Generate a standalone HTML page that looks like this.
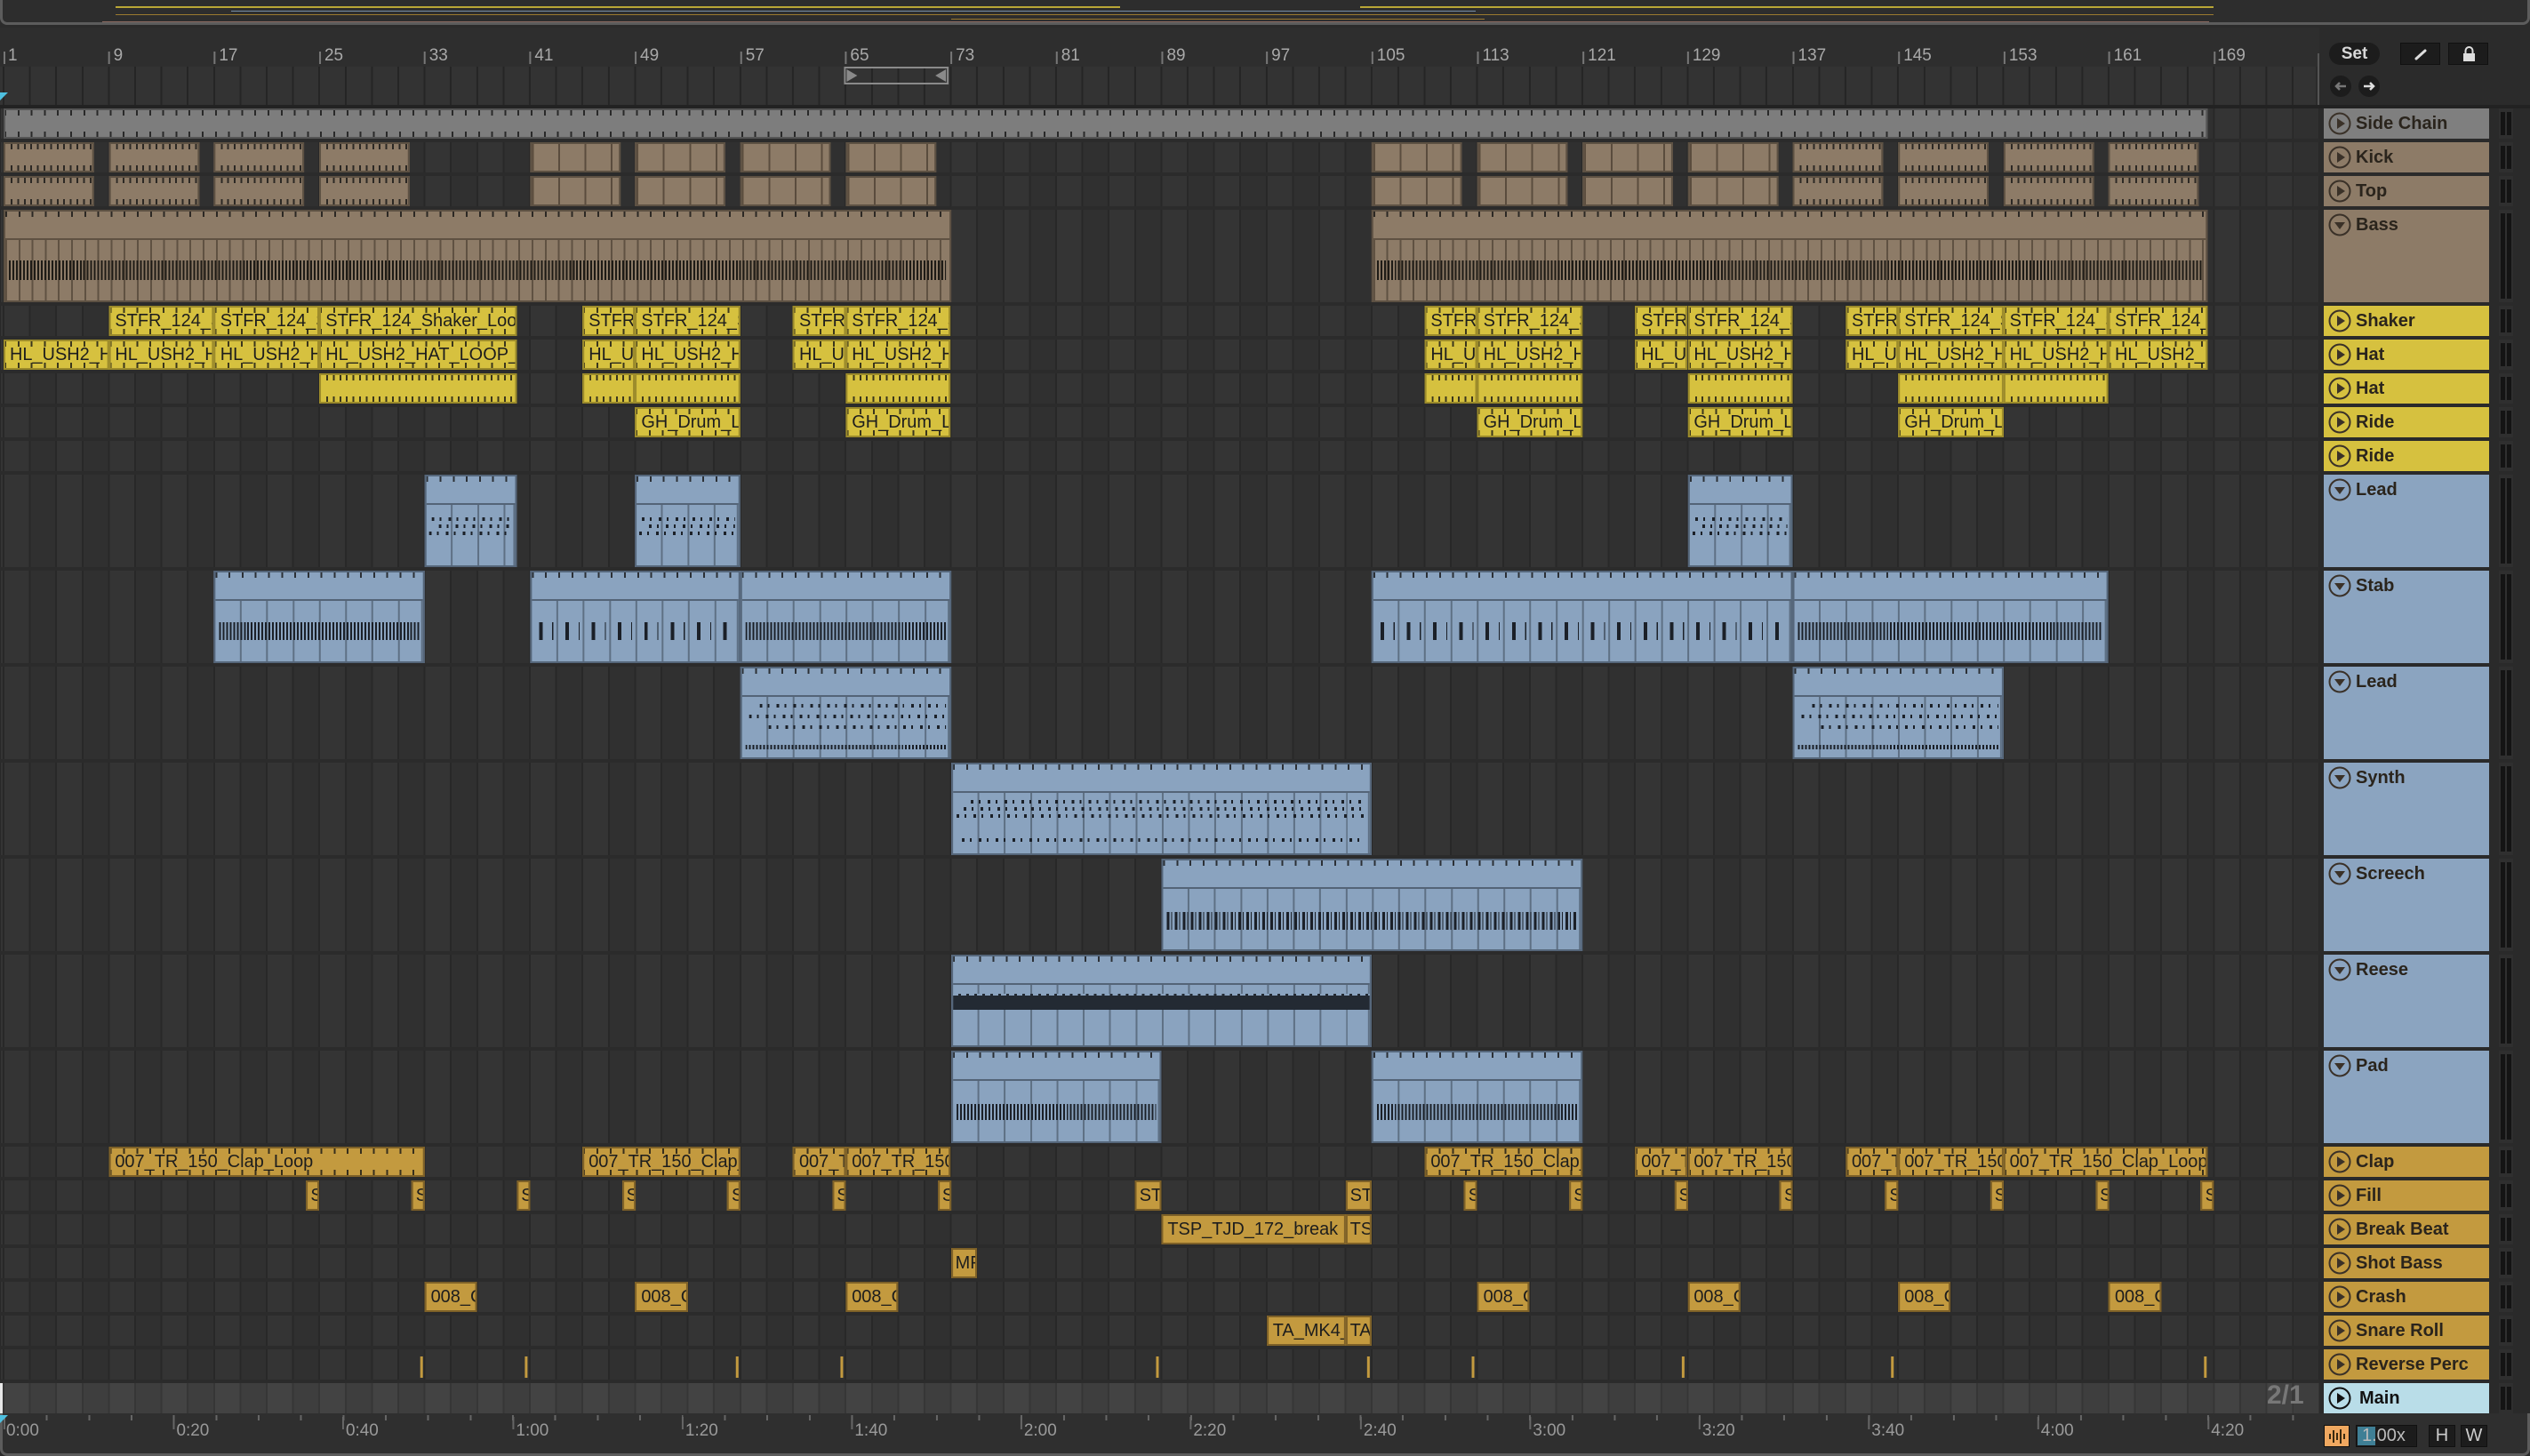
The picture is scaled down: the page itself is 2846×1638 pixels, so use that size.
<!DOCTYPE html>
<html><head><meta charset="utf-8">
<style>
*{margin:0;padding:0}
body{width:2846px;height:1638px;background:#2b2b2b;position:relative;overflow:hidden;font-family:"Liberation Sans",sans-serif}
.abs{position:absolute}
.wrap{position:absolute;left:0;top:0;width:2846px;height:1638px;transform:scaleX(0.9973);transform-origin:0 0}
.row{position:absolute;left:0;width:2616px;background:repeating-linear-gradient(90deg,#282828 0 2px,#343434 2px 29.68px,#282828 29.68px 31.68px,#303030 31.68px 59.36px);background-position:3px 0}
.c{position:absolute;top:0;bottom:0;box-sizing:border-box;overflow:hidden;white-space:nowrap;font:20px "Liberation Sans",sans-serif;color:#1d1d1d;padding-left:5px;line-height:31px}
.y{background:#d6c13f;border:2px solid #9c8b2b}
.o{background:#c39a3f;border:2px solid #7e6128}
.tn{background:#8d7b67;border:2px solid #5d5143}
.bl{background:#8aa3bf;border:2px solid #55667a}
.gr{background:#7d7d7d;border:2px solid #555}
.t::before,.t::after{content:"";position:absolute;left:-1px;right:0;height:6px;background:repeating-linear-gradient(90deg,rgba(20,20,20,.8) 0 2px,transparent 2px 14.84px)}
.t::before{top:0}.t::after{bottom:0}
.td::before,.td::after{content:"";position:absolute;left:6px;right:0;height:6px;background:repeating-linear-gradient(90deg,rgba(20,20,20,.8) 0 2px,transparent 2px 7.42px)}
.td::before{top:0}.td::after{bottom:0}
.dv{background-image:repeating-linear-gradient(90deg,rgba(40,30,20,.5) 0 2px,transparent 2px 29.68px)}
.hd{position:absolute;left:0;right:0;top:0;height:30px;border-bottom:2px solid rgba(40,50,60,.55)}
.hd.k::before{content:"";position:absolute;left:0;right:0;top:0;height:6px;background:repeating-linear-gradient(90deg,rgba(20,20,20,.8) 0 2px,transparent 2px 14.84px)}
.bd{position:absolute;left:0;right:0;top:32px;bottom:0;background:repeating-linear-gradient(90deg,rgba(40,50,60,.45) 0 2px,transparent 2px 29.68px);background-position:-2px 0}
.n{position:absolute;left:4px;right:4px;background:repeating-linear-gradient(90deg,#1b2028 0 2px,transparent 2px 4px)}
.nt{position:absolute;left:4px;right:4px;background:repeating-linear-gradient(90deg,#1e1b16 0 2px,transparent 2px 4px)}
.ns{position:absolute;left:8px;right:4px;background:repeating-linear-gradient(90deg,#1b2028 0 4px,transparent 4px 14.84px,#1b2028 14.84px 16px,transparent 16px 29.68px)}
.nd{position:absolute;left:6px;right:4px;height:4px;background:repeating-linear-gradient(90deg,#1b2028 0 3px,transparent 3px 9px,#1b2028 9px 11px,transparent 11px 19px)}
.h{position:absolute;left:2614px;width:186px;box-sizing:border-box;font:bold 20px "Liberation Sans",sans-serif;color:#2a241c;padding-left:36px;line-height:34px}
.m{position:absolute;left:2811px;width:16px;background:#2f2f2f}
.m::before{content:"";position:absolute;left:2px;width:5px;top:4px;bottom:4px;background:#141414}
.m::after{content:"";position:absolute;left:9px;width:5px;top:4px;bottom:4px;background:#141414}
.bn{position:absolute;top:52px;font:19px "Liberation Sans",sans-serif;color:#a9a9a9}
.bt{position:absolute;top:58px;width:2px;height:14px;background:#777}
.tl{position:absolute;top:1599px;font:19px "Liberation Sans",sans-serif;color:#9a9a9a}
.tt{position:absolute;top:1594px;width:2px;height:14px;background:#666}
.rp{position:absolute;width:3px;top:8px;bottom:2px;background:#c39a3f}
</style></head><body>

<!-- overview -->
<div class="abs" style="left:0;top:0;width:2846px;height:28px;background:#2d2d2d;border-bottom:3px solid #5c5c5c;border-left:3px solid #5c5c5c;border-right:3px solid #5c5c5c;border-radius:0 0 8px 8px;box-sizing:border-box"></div>
<div class="abs" style="left:130px;top:7px;width:1130px;height:2px;background:#b9a636"></div>
<div class="abs" style="left:1530px;top:7px;width:960px;height:2px;background:#b9a636"></div>
<div class="abs" style="left:260px;top:12px;width:1400px;height:1px;background:#7890a8"></div>
<div class="abs" style="left:130px;top:16px;width:2360px;height:1px;background:#9a7a30"></div>
<div class="abs" style="left:1070px;top:21px;width:600px;height:1px;background:#9a7a30"></div>
<div class="abs" style="left:115px;top:24px;width:2370px;height:1px;background:#8a6a60"></div>

<div class="abs" style="left:0;top:31px;width:2609px;height:44px;background:#2e2e2e"></div>
<div class="abs" style="left:0;top:118px;width:2846px;height:4px;background:#222"></div>
<div class="abs" style="left:2609px;top:122px;width:237px;height:1468px;background:#2a2a2a"></div>
<!-- bottom ruler bg -->
<div class="abs" style="left:0;top:1590px;width:2846px;height:48px;background:#2f2f2f;border-left:3px solid #5c5c5c;border-bottom:3px solid #5c5c5c;border-right:3px solid #5c5c5c;border-radius:0 0 8px 8px;box-sizing:border-box"></div>

<div class="wrap">
<div class="abs" style="left:0;top:75px;width:2612px;height:43px;background:repeating-linear-gradient(90deg,#252525 0 2px,#333 2px 29.68px);background-position:3px 0"></div>
<div class="abs" style="left:0;top:104px;width:0;height:0;border-left:9px solid #4ec0e0;border-bottom:9px solid transparent"></div>
<div class="abs" style="left:952px;top:75px;width:118px;height:20px;border:2px solid #8a8a8a;box-sizing:border-box"></div>
<div class="abs" style="left:955px;top:78px;width:0;height:0;border-left:12px solid #8a8a8a;border-top:7px solid transparent;border-bottom:7px solid transparent"></div>
<div class="abs" style="left:1055px;top:78px;width:0;height:0;border-right:12px solid #8a8a8a;border-top:7px solid transparent;border-bottom:7px solid transparent"></div>

<div class="bt" style="left:4px"></div><div class="bn" style="left:9px">1</div>
<div class="bt" style="left:122px"></div><div class="bn" style="left:128px">9</div>
<div class="bt" style="left:241px"></div><div class="bn" style="left:247px">17</div>
<div class="bt" style="left:360px"></div><div class="bn" style="left:366px">25</div>
<div class="bt" style="left:478px"></div><div class="bn" style="left:484px">33</div>
<div class="bt" style="left:597px"></div><div class="bn" style="left:603px">41</div>
<div class="bt" style="left:716px"></div><div class="bn" style="left:722px">49</div>
<div class="bt" style="left:835px"></div><div class="bn" style="left:841px">57</div>
<div class="bt" style="left:953px"></div><div class="bn" style="left:959px">65</div>
<div class="bt" style="left:1072px"></div><div class="bn" style="left:1078px">73</div>
<div class="bt" style="left:1191px"></div><div class="bn" style="left:1197px">81</div>
<div class="bt" style="left:1310px"></div><div class="bn" style="left:1316px">89</div>
<div class="bt" style="left:1428px"></div><div class="bn" style="left:1434px">97</div>
<div class="bt" style="left:1547px"></div><div class="bn" style="left:1553px">105</div>
<div class="bt" style="left:1666px"></div><div class="bn" style="left:1672px">113</div>
<div class="bt" style="left:1785px"></div><div class="bn" style="left:1791px">121</div>
<div class="bt" style="left:1903px"></div><div class="bn" style="left:1909px">129</div>
<div class="bt" style="left:2022px"></div><div class="bn" style="left:2028px">137</div>
<div class="bt" style="left:2141px"></div><div class="bn" style="left:2147px">145</div>
<div class="bt" style="left:2260px"></div><div class="bn" style="left:2266px">153</div>
<div class="bt" style="left:2378px"></div><div class="bn" style="left:2384px">161</div>
<div class="bt" style="left:2497px"></div><div class="bn" style="left:2501px">169</div>

<!-- ROWS -->
<div class="row" style="top:122px;height:34px"><div class="c gr t" style="left:4px;width:2486px"></div></div>

<div class="row" style="top:160px;height:34px">
<div class="c tn td" style="left:4px;width:102px"></div><div class="c tn td" style="left:122.7px;width:102px"></div><div class="c tn td" style="left:241.4px;width:102px"></div><div class="c tn td" style="left:360.2px;width:102px"></div>
<div class="c tn dv" style="left:597.6px;width:102px"></div><div class="c tn dv" style="left:716.3px;width:102px"></div><div class="c tn dv" style="left:835px;width:102px"></div><div class="c tn dv" style="left:953.8px;width:102px"></div>
<div class="c tn dv" style="left:1547.4px;width:102px"></div><div class="c tn dv" style="left:1666.1px;width:102px"></div><div class="c tn dv" style="left:1784.8px;width:102px"></div><div class="c tn dv" style="left:1903.5px;width:102px"></div>
<div class="c tn td" style="left:2022.2px;width:102px"></div><div class="c tn td" style="left:2141px;width:102px"></div><div class="c tn td" style="left:2259.7px;width:102px"></div><div class="c tn td" style="left:2378.4px;width:102px"></div>
</div>
<div class="row" style="top:198px;height:34px">
<div class="c tn td" style="left:4px;width:102px"></div><div class="c tn td" style="left:122.7px;width:102px"></div><div class="c tn td" style="left:241.4px;width:102px"></div><div class="c tn td" style="left:360.2px;width:102px"></div>
<div class="c tn dv" style="left:597.6px;width:102px"></div><div class="c tn dv" style="left:716.3px;width:102px"></div><div class="c tn dv" style="left:835px;width:102px"></div><div class="c tn dv" style="left:953.8px;width:102px"></div>
<div class="c tn dv" style="left:1547.4px;width:102px"></div><div class="c tn dv" style="left:1666.1px;width:102px"></div><div class="c tn dv" style="left:1784.8px;width:102px"></div><div class="c tn dv" style="left:1903.5px;width:102px"></div>
<div class="c tn td" style="left:2022.2px;width:102px"></div><div class="c tn td" style="left:2141px;width:102px"></div><div class="c tn td" style="left:2259.7px;width:102px"></div><div class="c tn td" style="left:2378.4px;width:102px"></div>
</div>

<div class="row" style="top:236px;height:104px">
<div class="c tn" style="left:4px;width:1068.5px"><div class="hd k" style="border-color:rgba(50,40,30,.5)"></div><div class="bd" style="background:repeating-linear-gradient(90deg,rgba(50,40,30,.5) 0 2px,transparent 2px 14.84px)"></div><div class="nt" style="top:55px;height:22px"></div></div>
<div class="c tn" style="left:1547.4px;width:942.6px"><div class="hd k" style="border-color:rgba(50,40,30,.5)"></div><div class="bd" style="background:repeating-linear-gradient(90deg,rgba(50,40,30,.5) 0 2px,transparent 2px 14.84px)"></div><div class="nt" style="top:55px;height:22px"></div></div>
</div>

<div class="row" style="top:344px;height:34px">
<div class="c y t" style="left:122.7px;width:118.7px">STFR_124_Shaker_Loop</div><div class="c y t" style="left:241.4px;width:118.8px">STFR_124_Shaker_Loop</div><div class="c y t" style="left:360.2px;width:222.6px">STFR_124_Shaker_Loop</div>
<div class="c y t" style="left:657px;width:59.3px">STFR_124</div><div class="c y t" style="left:716.3px;width:118.7px">STFR_124_Shaker</div>
<div class="c y t" style="left:894.4px;width:59.4px">STFR_124</div><div class="c y t" style="left:953.8px;width:118.7px">STFR_124_Shaker</div>
<div class="c y t" style="left:1606.7px;width:59.4px">STFR_124</div><div class="c y t" style="left:1666.1px;width:118.7px">STFR_124_Shaker</div>
<div class="c y t" style="left:1844.2px;width:59.3px">STFR_124</div><div class="c y t" style="left:1903.5px;width:118.7px">STFR_124_Shaker</div>
<div class="c y t" style="left:2081.6px;width:59.4px">STFR_124</div><div class="c y t" style="left:2141px;width:118.7px">STFR_124_Shaker</div><div class="c y t" style="left:2259.7px;width:118.7px">STFR_124_Shaker</div><div class="c y t" style="left:2378.4px;width:112px">STFR_124_Shaker</div>
</div>
<div class="row" style="top:382px;height:34px">
<div class="c y t" style="left:4px;width:118.7px">HL_USH2_HAT_LOOP</div><div class="c y t" style="left:122.7px;width:118.7px">HL_USH2_HAT_LOOP</div><div class="c y t" style="left:241.4px;width:118.8px">HL_USH2_HAT_LOOP</div><div class="c y t" style="left:360.2px;width:222.6px">HL_USH2_HAT_LOOP_</div>
<div class="c y t" style="left:657px;width:59.3px">HL_USH2</div><div class="c y t" style="left:716.3px;width:118.7px">HL_USH2_HAT</div>
<div class="c y t" style="left:894.4px;width:59.4px">HL_USH2</div><div class="c y t" style="left:953.8px;width:118.7px">HL_USH2_HAT</div>
<div class="c y t" style="left:1606.7px;width:59.4px">HL_USH2</div><div class="c y t" style="left:1666.1px;width:118.7px">HL_USH2_HAT</div>
<div class="c y t" style="left:1844.2px;width:59.3px">HL_USH2</div><div class="c y t" style="left:1903.5px;width:118.7px">HL_USH2_HAT</div>
<div class="c y t" style="left:2081.6px;width:59.4px">HL_USH2</div><div class="c y t" style="left:2141px;width:118.7px">HL_USH2_HAT</div><div class="c y t" style="left:2259.7px;width:118.7px">HL_USH2_HAT</div><div class="c y t" style="left:2378.4px;width:112px">HL_USH2_HAT</div>
</div>
<div class="row" style="top:420px;height:34px">
<div class="c y td" style="left:360.2px;width:222.6px"></div>
<div class="c y td" style="left:657px;width:59.3px"></div><div class="c y td" style="left:716.3px;width:118.7px"></div>
<div class="c y td" style="left:953.8px;width:118.7px"></div>
<div class="c y td" style="left:1606.7px;width:59.4px"></div><div class="c y td" style="left:1666.1px;width:118.7px"></div>
<div class="c y td" style="left:1903.5px;width:118.7px"></div>
<div class="c y td" style="left:2141px;width:118.7px"></div><div class="c y td" style="left:2259.7px;width:118.7px"></div>
</div>
<div class="row" style="top:458px;height:34px">
<div class="c y t" style="left:716.3px;width:118.7px">GH_Drum_Loop</div><div class="c y t" style="left:953.8px;width:118.7px">GH_Drum_Loop</div>
<div class="c y t" style="left:1666.1px;width:118.7px">GH_Drum_Loop</div><div class="c y t" style="left:1903.5px;width:118.7px">GH_Drum_Loop</div><div class="c y t" style="left:2141px;width:118.7px">GH_Drum_Loop</div>
</div>
<div class="row" style="top:496px;height:34px"></div>

<div class="row" style="top:534px;height:104px">
<div class="c bl" style="left:478.9px;width:103.9px"><div class="hd k"></div><div class="bd"></div><div class="nd" style="top:46px"></div><div class="nd" style="top:54px;left:14px"></div><div class="nd" style="top:62px;left:3px"></div></div>
<div class="c bl" style="left:716.3px;width:118.7px"><div class="hd k"></div><div class="bd"></div><div class="nd" style="top:46px"></div><div class="nd" style="top:54px;left:14px"></div><div class="nd" style="top:62px;left:3px"></div></div>
<div class="c bl" style="left:1903.5px;width:118.7px"><div class="hd k"></div><div class="bd"></div><div class="nd" style="top:46px"></div><div class="nd" style="top:54px;left:14px"></div><div class="nd" style="top:62px;left:3px"></div></div>
</div>
<div class="row" style="top:642px;height:104px">
<div class="c bl" style="left:241.4px;width:237.5px"><div class="hd k"></div><div class="bd"></div><div class="n" style="top:56px;height:20px"></div></div>
<div class="c bl" style="left:597.6px;width:237.4px"><div class="hd k"></div><div class="bd"></div><div class="ns" style="top:56px;height:20px"></div></div>
<div class="c bl" style="left:835px;width:237.5px"><div class="hd k"></div><div class="bd"></div><div class="n" style="top:56px;height:20px"></div></div>
<div class="c bl" style="left:1547.4px;width:474.8px"><div class="hd k"></div><div class="bd"></div><div class="ns" style="top:56px;height:20px"></div></div>
<div class="c bl" style="left:2022.2px;width:356.2px"><div class="hd k"></div><div class="bd"></div><div class="n" style="top:56px;height:20px"></div></div>
</div>
<div class="row" style="top:750px;height:104px">
<div class="c bl" style="left:835px;width:237.5px"><div class="hd k"></div><div class="bd"></div><div class="nd" style="top:40px;left:20px"></div><div class="nd" style="top:52px;left:8px"></div><div class="nd" style="top:64px;left:30px"></div><div class="n" style="top:86px;height:5px"></div></div>
<div class="c bl" style="left:2022.2px;width:237.5px"><div class="hd k"></div><div class="bd"></div><div class="nd" style="top:40px;left:20px"></div><div class="nd" style="top:52px;left:8px"></div><div class="nd" style="top:64px;left:30px"></div><div class="n" style="top:86px;height:5px"></div></div>
</div>
<div class="row" style="top:858px;height:104px">
<div class="c bl" style="left:1072.5px;width:474.9px"><div class="hd k"></div><div class="bd"></div><div class="nd" style="top:40px;left:20px"></div><div class="nd" style="top:48px;left:12px"></div><div class="nd" style="top:56px;left:4px"></div><div class="nd" style="top:83px;left:10px"></div></div>
</div>
<div class="row" style="top:966px;height:104px">
<div class="c bl" style="left:1309.9px;width:474.9px"><div class="hd k"></div><div class="bd"></div><div class="n" style="top:58px;height:20px;background:repeating-linear-gradient(90deg,#1b2028 0 3px,transparent 3px 5px,#1b2028 5px 6px,transparent 6px 9px)"></div></div>
</div>
<div class="row" style="top:1074px;height:104px">
<div class="c bl" style="left:1072.5px;width:474.9px"><div class="hd k"></div><div class="bd"></div><div class="abs" style="left:0;right:0;top:44px;height:16px;background:#232a33"></div><div class="abs" style="left:0;right:0;top:42px;height:2px;background:repeating-linear-gradient(90deg,#8aa3bf 0 6px,#232a33 6px 9px)"></div></div>
</div>
<div class="row" style="top:1182px;height:104px">
<div class="c bl" style="left:1072.5px;width:237.4px"><div class="hd k"></div><div class="bd"></div><div class="n" style="top:58px;height:18px"></div></div>
<div class="c bl" style="left:1547.4px;width:237.4px"><div class="hd k"></div><div class="bd"></div><div class="n" style="top:58px;height:18px"></div></div>
</div>

<div class="row" style="top:1290px;height:34px">
<div class="c o t" style="left:122.7px;width:356.2px">007_TR_150_Clap_Loop</div>
<div class="c o t" style="left:657px;width:178px">007_TR_150_Clap_Loop</div>
<div class="c o t" style="left:894.4px;width:59.4px">007_TR_150</div><div class="c o t" style="left:953.8px;width:118.7px">007_TR_150_Clap</div>
<div class="c o t" style="left:1606.7px;width:178.1px">007_TR_150_Clap_Loop</div>
<div class="c o t" style="left:1844.2px;width:59.3px">007_TR_150</div><div class="c o t" style="left:1903.5px;width:118.7px">007_TR_150_Clap</div>
<div class="c o t" style="left:2081.6px;width:59.4px">007_TR_150</div><div class="c o t" style="left:2141px;width:118.7px">007_TR_150_Clap</div><div class="c o t" style="left:2259.7px;width:230.3px">007_TR_150_Clap_Loop</div>
</div>
<div class="row" style="top:1328px;height:34px">
<div class="c o" style="left:345.3px;width:15px;padding-left:3px">S</div><div class="c o" style="left:464px;width:15px;padding-left:3px">S</div><div class="c o" style="left:582.8px;width:15px;padding-left:3px">S</div><div class="c o" style="left:701.5px;width:15px;padding-left:3px">S</div><div class="c o" style="left:820.2px;width:15px;padding-left:3px">S</div><div class="c o" style="left:938.9px;width:15px;padding-left:3px">S</div><div class="c o" style="left:1057.7px;width:15px;padding-left:3px">S</div>
<div class="c o" style="left:1280.2px;width:29.7px;padding-left:3px">ST</div><div class="c o" style="left:1517.7px;width:29.7px;padding-left:3px">ST</div>
<div class="c o" style="left:1651.2px;width:15px;padding-left:3px">S</div><div class="c o" style="left:1770px;width:15px;padding-left:3px">S</div><div class="c o" style="left:1888.7px;width:15px;padding-left:3px">S</div><div class="c o" style="left:2007.4px;width:15px;padding-left:3px">S</div><div class="c o" style="left:2126.1px;width:15px;padding-left:3px">S</div><div class="c o" style="left:2244.8px;width:15px;padding-left:3px">S</div><div class="c o" style="left:2363.5px;width:15px;padding-left:3px">S</div><div class="c o" style="left:2482.3px;width:15px;padding-left:3px">S</div>
</div>
<div class="row" style="top:1366px;height:34px">
<div class="c o" style="left:1309.9px;width:207.8px">TSP_TJD_172_break</div><div class="c o" style="left:1517.7px;width:29.7px;padding-left:3px">TS</div>
</div>
<div class="row" style="top:1404px;height:34px">
<div class="c o" style="left:1072.5px;width:29.7px;padding-left:3px">MF</div>
</div>
<div class="row" style="top:1442px;height:34px">
<div class="c o" style="left:478.9px;width:59.3px">008_Crash</div><div class="c o" style="left:716.3px;width:59.4px">008_Crash</div><div class="c o" style="left:953.8px;width:59.3px">008_Crash</div><div class="c o" style="left:1666.1px;width:59.3px">008_Crash</div><div class="c o" style="left:1903.5px;width:59.4px">008_Crash</div><div class="c o" style="left:2141px;width:59.3px">008_Crash</div><div class="c o" style="left:2378.4px;width:59.4px">008_Crash</div>
</div>
<div class="row" style="top:1480px;height:34px">
<div class="c o" style="left:1428.6px;width:89.1px">TA_MK4_Snare</div><div class="c o" style="left:1517.7px;width:29.7px;padding-left:3px">TA</div>
</div>
<div class="row" style="top:1518px;height:34px">
<div class="rp" style="left:474px"></div><div class="rp" style="left:592px"></div><div class="rp" style="left:830px"></div><div class="rp" style="left:948px"></div><div class="rp" style="left:1304px"></div><div class="rp" style="left:1542px"></div><div class="rp" style="left:1660px"></div><div class="rp" style="left:1897px"></div><div class="rp" style="left:2133px"></div><div class="rp" style="left:2486px"></div>
</div>
<div class="row" style="top:1556px;height:34px;background:repeating-linear-gradient(90deg,#363636 0 2px,#434343 2px 29.68px,#363636 29.68px 31.68px,#3e3e3e 31.68px 59.36px);background-position:3px 0"></div>

<!-- bottom ruler labels -->
<div class="abs" style="left:0;top:1592px;width:2612px;height:6px;background:repeating-linear-gradient(90deg,#666 0 2px,transparent 2px 47.8px);background-position:4px 0"></div>
<div class="tt" style="left:4px"></div><div class="tl" style="left:7px">0:00</div>
<div class="tt" style="left:195px"></div><div class="tl" style="left:199px">0:20</div>
<div class="tt" style="left:386px"></div><div class="tl" style="left:390px">0:40</div>
<div class="tt" style="left:578px"></div><div class="tl" style="left:582px">1:00</div>
<div class="tt" style="left:769px"></div><div class="tl" style="left:773px">1:20</div>
<div class="tt" style="left:960px"></div><div class="tl" style="left:964px">1:40</div>
<div class="tt" style="left:1151px"></div><div class="tl" style="left:1155px">2:00</div>
<div class="tt" style="left:1342px"></div><div class="tl" style="left:1346px">2:20</div>
<div class="tt" style="left:1534px"></div><div class="tl" style="left:1538px">2:40</div>
<div class="tt" style="left:1725px"></div><div class="tl" style="left:1729px">3:00</div>
<div class="tt" style="left:1916px"></div><div class="tl" style="left:1920px">3:20</div>
<div class="tt" style="left:2107px"></div><div class="tl" style="left:2111px">3:40</div>
<div class="tt" style="left:2298px"></div><div class="tl" style="left:2302px">4:00</div>
<div class="tt" style="left:2490px"></div><div class="tl" style="left:2494px">4:20</div>
</div>

<div class="abs" style="left:2607px;top:60px;width:2px;height:58px;background:#555"></div>
<div class="abs" style="left:0;top:1556px;width:3px;height:34px;background:#e8e8e8"></div>
<div class="abs" style="left:0;top:1592px;width:0;height:0;border-left:9px solid #4ec0e0;border-bottom:9px solid transparent"></div>
<div class="abs" style="left:2550px;top:1553px;font:bold 30px 'Liberation Sans',sans-serif;color:#777">2/1</div>

<!-- top right controls -->
<div class="abs" style="left:2620px;top:48px;width:57px;height:25px;border-radius:13px;background:#1c1c1c;color:#d8d8d8;font:bold 19px 'Liberation Sans',sans-serif;text-align:center;line-height:25px">Set</div>
<div class="abs" style="left:2700px;top:48px;width:45px;height:25px;background:#1c1c1c;border:1px solid #111;box-sizing:border-box"><svg width="45" height="25"><line x1="17" y1="17" x2="27" y2="8" stroke="#ddd" stroke-width="3" stroke-linecap="round"/></svg></div>
<div class="abs" style="left:2754px;top:48px;width:45px;height:25px;background:#1c1c1c;border:1px solid #111;box-sizing:border-box"><svg width="45" height="25"><rect x="16" y="11" width="13" height="9" fill="#ddd"/><path d="M18.5 11 V8 a4 4 0 0 1 8 0 V11" fill="none" stroke="#ddd" stroke-width="2"/></svg></div>
<svg class="abs" style="left:2620px;top:84px" width="60" height="28"><circle cx="13" cy="13" r="12" fill="#1c1c1c"/><path d="M19 13H8M12 9l-4 4 4 4" stroke="#777" stroke-width="2.5" fill="none"/><circle cx="45" cy="13" r="12" fill="#1c1c1c"/><path d="M39 13H50M46 9l4 4-4 4" stroke="#ddd" stroke-width="2.5" fill="none"/></svg>

<!-- headers -->
<div class="h" style="top:122px;height:34px;background:#7f7f7f">Side Chain</div>
<div class="h" style="top:160px;height:34px;background:#8d7b67">Kick</div>
<div class="h" style="top:198px;height:34px;background:#8d7b67">Top</div>
<div class="h" style="top:236px;height:104px;background:#8d7b67">Bass</div>
<div class="h" style="top:344px;height:34px;background:#d6c13f">Shaker</div>
<div class="h" style="top:382px;height:34px;background:#d6c13f">Hat</div>
<div class="h" style="top:420px;height:34px;background:#d6c13f">Hat</div>
<div class="h" style="top:458px;height:34px;background:#d6c13f">Ride</div>
<div class="h" style="top:496px;height:34px;background:#d6c13f">Ride</div>
<div class="h" style="top:534px;height:104px;background:#8ba4c0">Lead</div>
<div class="h" style="top:642px;height:104px;background:#8ba4c0">Stab</div>
<div class="h" style="top:750px;height:104px;background:#8ba4c0">Lead</div>
<div class="h" style="top:858px;height:104px;background:#8ba4c0">Synth</div>
<div class="h" style="top:966px;height:104px;background:#8ba4c0">Screech</div>
<div class="h" style="top:1074px;height:104px;background:#8ba4c0">Reese</div>
<div class="h" style="top:1182px;height:104px;background:#8ba4c0">Pad</div>
<div class="h" style="top:1290px;height:34px;background:#c39a3f">Clap</div>
<div class="h" style="top:1328px;height:34px;background:#c39a3f">Fill</div>
<div class="h" style="top:1366px;height:34px;background:#c39a3f">Break Beat</div>
<div class="h" style="top:1404px;height:34px;background:#c39a3f">Shot Bass</div>
<div class="h" style="top:1442px;height:34px;background:#c39a3f">Crash</div>
<div class="h" style="top:1480px;height:34px;background:#c39a3f">Snare Roll</div>
<div class="h" style="top:1518px;height:34px;background:#c39a3f">Reverse Perc</div>
<div class="h" style="top:1556px;height:34px;background:#b9dde8;color:#111;padding-left:40px">Main</div>

<svg class="abs" style="left:2614px;top:122px" width="34" height="1468">
<g fill="none" stroke="#3a3128" stroke-width="2">
<circle cx="18" cy="17" r="11.5"/><circle cx="18" cy="55" r="11.5"/><circle cx="18" cy="93" r="11.5"/><circle cx="18" cy="131" r="11.5"/>
<circle cx="18" cy="239" r="11.5"/><circle cx="18" cy="277" r="11.5"/><circle cx="18" cy="315" r="11.5"/><circle cx="18" cy="353" r="11.5"/><circle cx="18" cy="391" r="11.5"/>
<circle cx="18" cy="429" r="11.5"/><circle cx="18" cy="537" r="11.5"/><circle cx="18" cy="645" r="11.5"/><circle cx="18" cy="753" r="11.5"/><circle cx="18" cy="861" r="11.5"/><circle cx="18" cy="969" r="11.5"/><circle cx="18" cy="1077" r="11.5"/>
<circle cx="18" cy="1185" r="11.5"/><circle cx="18" cy="1223" r="11.5"/><circle cx="18" cy="1261" r="11.5"/><circle cx="18" cy="1299" r="11.5"/><circle cx="18" cy="1337" r="11.5"/><circle cx="18" cy="1375" r="11.5"/><circle cx="18" cy="1413" r="11.5"/>
<circle cx="18" cy="1451" r="11.5" stroke="#111"/>
</g>
<g fill="#3a3128">
<path d="M15 11v12l9-6z"/><path d="M15 49v12l9-6z"/><path d="M15 87v12l9-6z"/><path d="M12 128h12l-6 8z"/>
<path d="M15 233v12l9-6z"/><path d="M15 271v12l9-6z"/><path d="M15 309v12l9-6z"/><path d="M15 347v12l9-6z"/><path d="M15 385v12l9-6z"/>
<path d="M12 426h12l-6 8z"/><path d="M12 534h12l-6 8z"/><path d="M12 642h12l-6 8z"/><path d="M12 750h12l-6 8z"/><path d="M12 858h12l-6 8z"/><path d="M12 966h12l-6 8z"/><path d="M12 1074h12l-6 8z"/>
<path d="M15 1179v12l9-6z"/><path d="M15 1217v12l9-6z"/><path d="M15 1255v12l9-6z"/><path d="M15 1293v12l9-6z"/><path d="M15 1331v12l9-6z"/><path d="M15 1369v12l9-6z"/><path d="M15 1407v12l9-6z"/>
<path d="M15 1445v12l9-6z" fill="#111"/>
</g>
</svg>

<div class="m" style="top:122px;height:34px"></div><div class="m" style="top:160px;height:34px"></div><div class="m" style="top:198px;height:34px"></div><div class="m" style="top:236px;height:104px"></div>
<div class="m" style="top:344px;height:34px"></div><div class="m" style="top:382px;height:34px"></div><div class="m" style="top:420px;height:34px"></div><div class="m" style="top:458px;height:34px"></div><div class="m" style="top:496px;height:34px"></div>
<div class="m" style="top:534px;height:104px"></div><div class="m" style="top:642px;height:104px"></div><div class="m" style="top:750px;height:104px"></div><div class="m" style="top:858px;height:104px"></div><div class="m" style="top:966px;height:104px"></div><div class="m" style="top:1074px;height:104px"></div><div class="m" style="top:1182px;height:104px"></div>
<div class="m" style="top:1290px;height:34px"></div><div class="m" style="top:1328px;height:34px"></div><div class="m" style="top:1366px;height:34px"></div><div class="m" style="top:1404px;height:34px"></div><div class="m" style="top:1442px;height:34px"></div><div class="m" style="top:1480px;height:34px"></div><div class="m" style="top:1518px;height:34px"></div><div class="m" style="top:1556px;height:34px"></div>

<div class="abs" style="left:2614px;top:1603px;width:29px;height:25px;background:#f0a860;border:1px solid #111;box-sizing:border-box"><svg width="27" height="23"><g stroke="#3a2a10" stroke-width="2"><line x1="6" y1="9" x2="6" y2="15"/><line x1="10" y1="5" x2="10" y2="19"/><line x1="14" y1="8" x2="14" y2="16"/><line x1="18" y1="4" x2="18" y2="20"/><line x1="22" y1="9" x2="22" y2="15"/></g></svg></div>
<div class="abs" style="left:2650px;top:1603px;width:69px;height:25px;background:#1c1c1c;border:1px solid #111;box-sizing:border-box"></div>
<div class="abs" style="left:2652px;top:1605px;width:20px;height:21px;background:#3f7f95"></div>
<div class="abs" style="left:2657px;top:1603px;font:20px 'Liberation Sans',sans-serif;color:#bbb;line-height:25px">1.00x</div>
<div class="abs" style="left:2732px;top:1603px;width:30px;height:25px;background:#1c1c1c;border:1px solid #111;box-sizing:border-box;color:#ccc;font:20px 'Liberation Sans',sans-serif;text-align:center;line-height:23px">H</div>
<div class="abs" style="left:2768px;top:1603px;width:30px;height:25px;background:#1c1c1c;border:1px solid #111;box-sizing:border-box;color:#ccc;font:20px 'Liberation Sans',sans-serif;text-align:center;line-height:23px">W</div>

</body></html>
